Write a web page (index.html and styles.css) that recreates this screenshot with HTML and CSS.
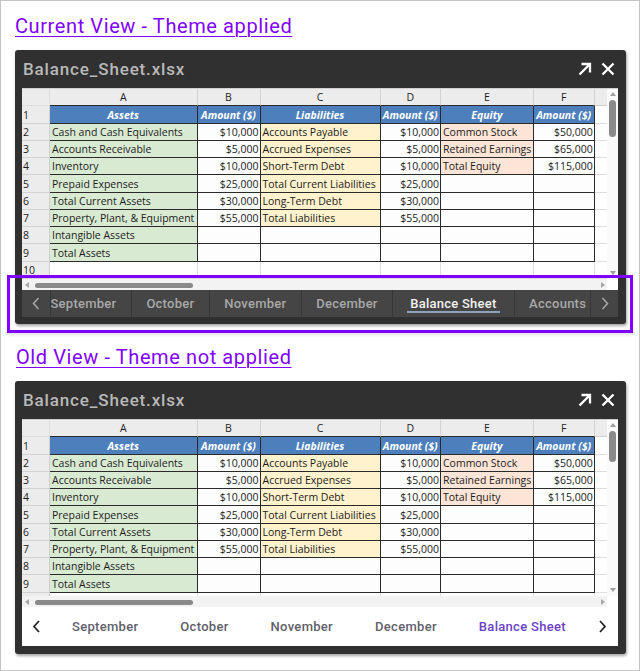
FILE: index.html
```html
<!DOCTYPE html>
<html lang="en">
<head>
<meta charset="utf-8">
<title>Balance Sheet viewer themes</title>
<link rel="stylesheet" href="styles.css">
</head>
<body>
<div class="page">
  <a class="heading" href="#current">Current View - Theme applied</a>
  <section class="viewer">
    <div class="titlebar">
      <span class="fname">Balance_Sheet.xlsx</span>
      <div class="tools">
        <svg width="14" height="14" viewBox="0 0 14 14"><path d="M1.5 12.5 L12 2 M3.5 2 H12 V10.5" fill="none" stroke="#fff" stroke-width="2.3"/></svg>
        <svg width="14" height="14" viewBox="0 0 14 14"><path d="M1.5 1.5 L12.5 12.5 M12.5 1.5 L1.5 12.5" fill="none" stroke="#fff" stroke-width="2.3"/></svg>
      </div>
    </div>
    <div class="sheet tall">
      <div class="row hdr"><div class="corner"></div><div class="hd hb">A</div><div class="hd hb">B</div><div class="hd hb">C</div><div class="hd hb">D</div><div class="hd hb">E</div><div class="hd hb">F</div><div class="hd"></div></div>
      <div class="row"><div class="rh">1</div><div class="c bl">Assets</div><div class="c bl">Amount ($)</div><div class="c bl">Liabilities</div><div class="c bl">Amount ($)</div><div class="c bl">Equity</div><div class="c bl">Amount ($)</div><div class="c e"></div></div>
      <div class="row"><div class="rh">2</div><div class="c g">Cash and Cash Equivalents</div><div class="c w num">$10,000</div><div class="c y">Accounts Payable</div><div class="c w num">$10,000</div><div class="c p">Common Stock</div><div class="c w num">$50,000</div><div class="c e"></div></div>
      <div class="row"><div class="rh">3</div><div class="c g">Accounts Receivable</div><div class="c w num">$5,000</div><div class="c y">Accrued Expenses</div><div class="c w num">$5,000</div><div class="c p">Retained Earnings</div><div class="c w num">$65,000</div><div class="c e"></div></div>
      <div class="row"><div class="rh">4</div><div class="c g">Inventory</div><div class="c w num">$10,000</div><div class="c y">Short-Term Debt</div><div class="c w num">$10,000</div><div class="c p">Total Equity</div><div class="c w num">$115,000</div><div class="c e"></div></div>
      <div class="row"><div class="rh">5</div><div class="c g">Prepaid Expenses</div><div class="c w num">$25,000</div><div class="c y">Total Current Liabilities</div><div class="c w num">$25,000</div><div class="c w"></div><div class="c w"></div><div class="c e"></div></div>
      <div class="row"><div class="rh">6</div><div class="c g">Total Current Assets</div><div class="c w num">$30,000</div><div class="c y">Long-Term Debt</div><div class="c w num">$30,000</div><div class="c w"></div><div class="c w"></div><div class="c e"></div></div>
      <div class="row"><div class="rh">7</div><div class="c g">Property, Plant, &amp; Equipment</div><div class="c w num">$55,000</div><div class="c y">Total Liabilities</div><div class="c w num">$55,000</div><div class="c w"></div><div class="c w"></div><div class="c e"></div></div>
      <div class="row"><div class="rh">8</div><div class="c g">Intangible Assets</div><div class="c w"></div><div class="c w"></div><div class="c w"></div><div class="c w"></div><div class="c w"></div><div class="c e"></div></div>
      <div class="row"><div class="rh">9</div><div class="c g">Total Assets</div><div class="c w"></div><div class="c w"></div><div class="c w"></div><div class="c w"></div><div class="c w"></div><div class="c e"></div></div>
      <div class="row"><div class="rh">10</div><div class="c e"></div><div class="c e"></div><div class="c e"></div><div class="c e"></div><div class="c e"></div><div class="c e"></div><div class="c e"></div></div>
      <div class="row"><div class="rh">11</div><div class="c e"></div><div class="c e"></div><div class="c e"></div><div class="c e"></div><div class="c e"></div><div class="c e"></div><div class="c e"></div></div>
      <div class="vscroll"><span class="tri up"></span><span class="vthumb"></span><span class="vfill"></span><span class="tri down"></span></div>
      <div class="hscroll"><span class="abox"><span class="tri left"></span></span><span class="hthumb"></span><span class="hfill"></span><span class="abox"><span class="tri right"></span></span></div>
      <div class="scorner"></div>
    </div>
    <div class="tabbar dark">
      <div class="navbtn lbtn"><svg width="8" height="13" viewBox="0 0 8 13"><polyline points="6.5,1 1.5,6.5 6.5,12" fill="none" stroke="#a9a9a9" stroke-width="1.5"/></svg></div>
      <div class="strip">
        <div class="tab first">September</div>
        <div class="tab">October</div>
        <div class="tab">November</div>
        <div class="tab">December</div>
        <div class="tab sel">Balance Sheet</div>
        <div class="tab">Accounts</div>
      </div>
      <div class="navbtn rbtn"><svg width="8" height="13" viewBox="0 0 8 13"><polyline points="1.5,1 6.5,6.5 1.5,12" fill="none" stroke="#a9a9a9" stroke-width="1.5"/></svg></div>
    </div>
  </section>
  <div class="focus"></div>

  <a class="heading second" href="#old">Old View - Theme not applied</a>
  <section class="viewer old">
    <div class="titlebar">
      <span class="fname">Balance_Sheet.xlsx</span>
      <div class="tools">
        <svg width="14" height="14" viewBox="0 0 14 14"><path d="M1.5 12.5 L12 2 M3.5 2 H12 V10.5" fill="none" stroke="#fff" stroke-width="2.3"/></svg>
        <svg width="14" height="14" viewBox="0 0 14 14"><path d="M1.5 1.5 L12.5 12.5 M12.5 1.5 L1.5 12.5" fill="none" stroke="#fff" stroke-width="2.3"/></svg>
      </div>
    </div>
    <div class="sheet short">
      <div class="row hdr"><div class="corner"></div><div class="hd hb">A</div><div class="hd hb">B</div><div class="hd hb">C</div><div class="hd hb">D</div><div class="hd hb">E</div><div class="hd hb">F</div><div class="hd"></div></div>
      <div class="row"><div class="rh">1</div><div class="c bl">Assets</div><div class="c bl">Amount ($)</div><div class="c bl">Liabilities</div><div class="c bl">Amount ($)</div><div class="c bl">Equity</div><div class="c bl">Amount ($)</div><div class="c e"></div></div>
      <div class="row"><div class="rh">2</div><div class="c g">Cash and Cash Equivalents</div><div class="c w num">$10,000</div><div class="c y">Accounts Payable</div><div class="c w num">$10,000</div><div class="c p">Common Stock</div><div class="c w num">$50,000</div><div class="c e"></div></div>
      <div class="row"><div class="rh">3</div><div class="c g">Accounts Receivable</div><div class="c w num">$5,000</div><div class="c y">Accrued Expenses</div><div class="c w num">$5,000</div><div class="c p">Retained Earnings</div><div class="c w num">$65,000</div><div class="c e"></div></div>
      <div class="row"><div class="rh">4</div><div class="c g">Inventory</div><div class="c w num">$10,000</div><div class="c y">Short-Term Debt</div><div class="c w num">$10,000</div><div class="c p">Total Equity</div><div class="c w num">$115,000</div><div class="c e"></div></div>
      <div class="row"><div class="rh">5</div><div class="c g">Prepaid Expenses</div><div class="c w num">$25,000</div><div class="c y">Total Current Liabilities</div><div class="c w num">$25,000</div><div class="c w"></div><div class="c w"></div><div class="c e"></div></div>
      <div class="row"><div class="rh">6</div><div class="c g">Total Current Assets</div><div class="c w num">$30,000</div><div class="c y">Long-Term Debt</div><div class="c w num">$30,000</div><div class="c w"></div><div class="c w"></div><div class="c e"></div></div>
      <div class="row"><div class="rh">7</div><div class="c g">Property, Plant, &amp; Equipment</div><div class="c w num">$55,000</div><div class="c y">Total Liabilities</div><div class="c w num">$55,000</div><div class="c w"></div><div class="c w"></div><div class="c e"></div></div>
      <div class="row"><div class="rh">8</div><div class="c g">Intangible Assets</div><div class="c w"></div><div class="c w"></div><div class="c w"></div><div class="c w"></div><div class="c w"></div><div class="c e"></div></div>
      <div class="row"><div class="rh">9</div><div class="c g">Total Assets</div><div class="c w"></div><div class="c w"></div><div class="c w"></div><div class="c w"></div><div class="c w"></div><div class="c e"></div></div>
      <div class="row"><div class="rh">10</div><div class="c e"></div><div class="c e"></div><div class="c e"></div><div class="c e"></div><div class="c e"></div><div class="c e"></div><div class="c e"></div></div>
      <div class="vscroll"><span class="tri up"></span><span class="vthumb small"></span><span class="vfill"></span><span class="tri down"></span></div>
      <div class="hscroll"><span class="abox"><span class="tri left"></span></span><span class="hthumb"></span><span class="hfill"></span><span class="abox"><span class="tri right"></span></span></div>
      <div class="scorner"></div>
    </div>
    <div class="tabbar light">
      <div class="navbtn lbtn"><svg width="9" height="13" viewBox="0 0 9 13"><polyline points="7,1 2,6.5 7,12" fill="none" stroke="#1e1e1e" stroke-width="1.7"/></svg></div>
      <div class="strip">
        <div class="tab">September</div>
        <div class="tab">October</div>
        <div class="tab">November</div>
        <div class="tab">December</div>
        <div class="tab sel">Balance Sheet</div>
      </div>
      <div class="navbtn rbtn"><svg width="9" height="13" viewBox="0 0 9 13"><polyline points="2,1 7,6.5 2,12" fill="none" stroke="#1e1e1e" stroke-width="1.7"/></svg></div>
    </div>
  </section>
</div>
</body>
</html>
```

FILE: styles.css
```css
html, body {
  margin: 0;
  padding: 0;
  background: #ffffff;
}

.page {
  position: relative;
  width: 640px;
  height: 671px;
  box-sizing: border-box;
  border: 1px solid #c4c4c4;
  padding: 13px 0 0 14px;
  font-family: Roboto, "Noto Sans", sans-serif;
}

.heading {
  display: block;
  width: max-content;
  font-size: 20px;
  line-height: 24px;
  letter-spacing: 0.6px;
  color: #7f00ff;
  text-decoration: underline;
  text-decoration-thickness: 1px;
  text-underline-offset: 3px;
}

.heading.second {
  margin-top: 21px;
  padding-left: 1px;
}

.viewer {
  margin-top: 12px;
  width: 611px;
  box-sizing: border-box;
  background: #303030;
  border-radius: 3px;
  padding: 0 8px 7px 7px;
  box-shadow: 1px 2px 3px rgba(0, 0, 0, 0.35);
}

.viewer.old {
  padding-bottom: 8px;
}

.titlebar {
  height: 38px;
  display: flex;
  align-items: center;
  justify-content: space-between;
}

.fname {
  font-size: 17px;
  font-weight: 500;
  color: #b9b9b9;
  letter-spacing: 0.85px;
  padding-left: 1px;
}

.tools {
  display: flex;
  gap: 9px;
  margin-right: 3px;
}

.tools svg {
  display: block;
}

/* spreadsheet */
.sheet {
  position: relative;
  background: #ffffff;
  overflow: hidden;
  border-top: 1px solid #d0d0d0;
  box-sizing: border-box;
  font-family: "Open Sans", "DejaVu Sans", sans-serif;
  font-size: 10.5px;
  color: #1c1c1c;
}

.sheet.tall { height: 202px; }
.sheet.short { height: 188px; }

.row {
  display: grid;
  grid-template-columns: 28px 147.5px 63px 120px 60.5px 92.7px 61px 60px;
  height: 17.25px;
}

.row > div {
  box-sizing: border-box;
  border-right: 1px solid #dedede;
  border-bottom: 1px solid #dedede;
  display: flex;
  align-items: center;
  white-space: nowrap;
  overflow: hidden;
  line-height: 15px;
  padding-top: 1.5px;
}

.corner,
.hd {
  background: #ececec;
}

.hd {
  justify-content: center;
  border-right-color: #d2d2d2 !important;
  border-bottom-color: #cfcfcf !important;
}

.hd.hb {
  border-bottom-color: #2a2a2a !important;
}

.rh {
  background: #ececec;
  padding-left: 1px;
  border-right-color: #cfcfcf !important;
  border-bottom-color: #d2d2d2 !important;
}

.c {
  padding-left: 2px;
}

.bl, .g, .y, .p, .w {
  border-right-color: #2a2a2a !important;
  border-bottom-color: #2a2a2a !important;
}

.bl {
  background: #4d7fbd;
  color: #ffffff;
  font-weight: 700;
  font-style: italic;
  justify-content: center;
  padding-left: 0;
}

.g { background: #d9ead3; }
.y { background: #fff2cc; }
.p { background: #fce4d6; }
.w { background: #fdfdfd; }
.e { background: #ffffff; }

.num {
  justify-content: flex-end;
  padding-left: 0;
  padding-right: 1px;
}

/* scrollbars (overlay the grid edges) */
.vscroll {
  position: absolute;
  top: 0;
  right: 0;
  bottom: 11px;
  width: 11px;
  background: #fafafa;
  display: flex;
  flex-direction: column;
  align-items: center;
  padding: 3px 0 4px;
  box-sizing: border-box;
}

.vthumb {
  margin-top: 4px;
  width: 7px;
  height: 37px;
  border-radius: 4px;
  background: #8a8a8a;
}

.vthumb.small {
  height: 31px;
}

.vfill { flex: 1; }

.hscroll {
  position: absolute;
  left: 0;
  right: 11px;
  bottom: 0;
  height: 11px;
  background: #f3f3f3;
  display: flex;
  align-items: center;
}

.abox {
  width: 10px;
  display: flex;
  justify-content: center;
}

.hthumb {
  margin-left: 3px;
  width: 158px;
  height: 5px;
  margin-top: 1px;
  border-radius: 3px;
  background: #8a8a8a;
}

.hfill { flex: 1; }

.hscroll .abox:last-child {
  width: 8px;
}

.scorner {
  position: absolute;
  right: 0;
  bottom: 0;
  width: 11px;
  height: 11px;
  background: #ffffff;
}

.tri {
  display: block;
  width: 0;
  height: 0;
}

.tri.up {
  border-left: 3.5px solid transparent;
  border-right: 3.5px solid transparent;
  border-bottom: 4px solid #9e9e9e;
}

.tri.down {
  border-left: 3.5px solid transparent;
  border-right: 3.5px solid transparent;
  border-top: 4px solid #9e9e9e;
}

.tri.left {
  border-top: 3px solid transparent;
  border-bottom: 3px solid transparent;
  border-right: 4px solid #a6a6a6;
}

.tri.right {
  border-top: 3.5px solid transparent;
  border-bottom: 3.5px solid transparent;
  border-left: 4.5px solid #a6a6a6;
}

/* tab bars */
.tabbar {
  display: flex;
  font-family: Roboto, "Noto Sans", sans-serif;
  font-weight: 500;
  font-size: 13px;
}

.navbtn {
  display: flex;
  align-items: center;
  justify-content: center;
  flex-shrink: 0;
}

.navbtn svg { display: block; }

.strip {
  display: flex;
  overflow: hidden;
  flex-shrink: 1;
}

.tab {
  display: flex;
  align-items: center;
  white-space: nowrap;
  flex-shrink: 0;
  position: relative;
}

/* themed (dark) */
.tabbar.dark {
  height: 27px;
  background: #454545;
}

.tabbar.dark .lbtn {
  width: 28px;
  border-right: 1px solid #363636;
}

.tabbar.dark .strip {
  flex: 1;
}

.tabbar.dark .rbtn {
  width: 27px;
  border-left: 1px solid #363636;
}

.tabbar.dark .tab {
  padding: 0 14.5px;
  border-right: 1px solid #363636;
  color: #a8a8a8;
  letter-spacing: 0.25px;
}

.tabbar.dark .tab.first {
  margin-left: -15px;
}

.tabbar.dark .tab.sel {
  color: #f2f2f2;
  padding: 0 17px;
}

.tabbar.dark .tab.sel::after {
  content: "";
  position: absolute;
  left: 14px;
  right: 14px;
  bottom: 4px;
  height: 2px;
  background: #8ea3bd;
}

/* plain (light) */
.tabbar.light {
  height: 39px;
  background: #ffffff;
}

.tabbar.light .lbtn {
  width: 29px;
}

.tabbar.light .rbtn {
  flex: 1;
}

.tabbar.light .tab {
  padding: 0 21px;
  color: #5f5f6b;
  letter-spacing: 0.3px;
}

.tabbar.light .tab.sel {
  color: #6d3fc7;
}

.tabbar.light .tab.sel::before {
  content: "";
  position: absolute;
  left: 0;
  right: 0;
  top: -2px;
  height: 2px;
  background: #6f42c9;
}

/* highlight frame drawn over the first viewer */
.focus {
  position: absolute;
  left: 6px;
  top: 274px;
  width: 626px;
  height: 58px;
  box-sizing: border-box;
  border: 3px solid #7f00ff;
  box-shadow: 0 2px 3px rgba(0, 0, 0, 0.12);
  pointer-events: none;
}
```
